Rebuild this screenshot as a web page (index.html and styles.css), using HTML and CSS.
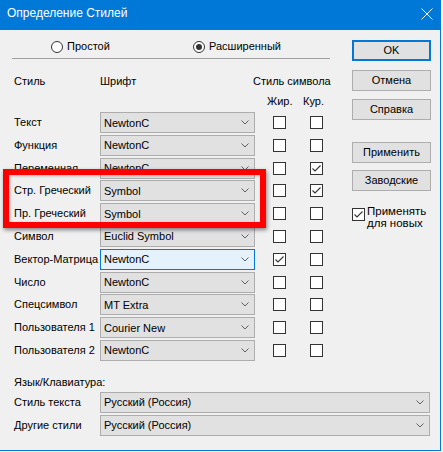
FILE: index.html
```html
<!DOCTYPE html>
<html lang="ru">
<head>
<meta charset="utf-8">
<title>Определение Стилей</title>
<link rel="stylesheet" href="styles.css">
</head>
<body>
<div class="window">
  <div class="titlebar">
    <span class="title">Определение Стилей</span>
    <svg class="close" width="12" height="12" viewBox="0 0 12 12"><path d="M0.5 0.5 L11.5 11.5 M11.5 0.5 L0.5 11.5" stroke="#fff" stroke-width="1" fill="none"/></svg>
  </div>
  <div class="client">
    <div class="top">
      <div class="main">
        <div class="modes">
          <label class="radio r1"><span class="dot"></span>Простой</label>
          <label class="radio"><span class="dot on"></span>Расширенный</label>
        </div>
        <div class="sep"></div>
        <div class="head1">
          <span class="h-style">Стиль</span>
          <span class="h-font">Шрифт</span>
          <span class="h-sym">Стиль символа</span>
        </div>
        <div class="head2">
          <span class="h-bold">Жир.</span>
          <span class="h-ital">Кур.</span>
        </div>
        <div class="rows">
          <span class="lbl">Текст</span>
          <div class="combo"><span>NewtonC</span><svg class="chev" width="8" height="5" viewBox="0 0 8 5"><path d="M0.5 0.5 L4 4 L7.5 0.5" stroke="#606060" fill="none"/></svg></div>
          <span class="cb c1"></span><span class="cb"></span>

          <span class="lbl">Функция</span>
          <div class="combo"><span>NewtonC</span><svg class="chev" width="8" height="5" viewBox="0 0 8 5"><path d="M0.5 0.5 L4 4 L7.5 0.5" stroke="#606060" fill="none"/></svg></div>
          <span class="cb c1"></span><span class="cb"></span>

          <span class="lbl">Переменная</span>
          <div class="combo"><span>NewtonC</span><svg class="chev" width="8" height="5" viewBox="0 0 8 5"><path d="M0.5 0.5 L4 4 L7.5 0.5" stroke="#606060" fill="none"/></svg></div>
          <span class="cb c1"></span><span class="cb checked"><svg width="11" height="11" viewBox="0 0 11 11"><path d="M1.5 5.5 L4 8 L9.5 2.5" stroke="#333" stroke-width="1.1" fill="none"/></svg></span>

          <span class="lbl">Стр. Греческий</span>
          <div class="combo"><span>Symbol</span><svg class="chev" width="8" height="5" viewBox="0 0 8 5"><path d="M0.5 0.5 L4 4 L7.5 0.5" stroke="#606060" fill="none"/></svg></div>
          <span class="cb c1"></span><span class="cb checked"><svg width="11" height="11" viewBox="0 0 11 11"><path d="M1.5 5.5 L4 8 L9.5 2.5" stroke="#333" stroke-width="1.1" fill="none"/></svg></span>

          <span class="lbl">Пр. Греческий</span>
          <div class="combo"><span>Symbol</span><svg class="chev" width="8" height="5" viewBox="0 0 8 5"><path d="M0.5 0.5 L4 4 L7.5 0.5" stroke="#606060" fill="none"/></svg></div>
          <span class="cb c1"></span><span class="cb"></span>

          <span class="lbl">Символ</span>
          <div class="combo"><span>Euclid Symbol</span><svg class="chev" width="8" height="5" viewBox="0 0 8 5"><path d="M0.5 0.5 L4 4 L7.5 0.5" stroke="#606060" fill="none"/></svg></div>
          <span class="cb c1"></span><span class="cb"></span>

          <span class="lbl">Вектор-Матрица</span>
          <div class="combo focus"><span>NewtonC</span><svg class="chev" width="8" height="5" viewBox="0 0 8 5"><path d="M0.5 0.5 L4 4 L7.5 0.5" stroke="#606060" fill="none"/></svg></div>
          <span class="cb c1 checked"><svg width="11" height="11" viewBox="0 0 11 11"><path d="M1.5 5.5 L4 8 L9.5 2.5" stroke="#333" stroke-width="1.1" fill="none"/></svg></span><span class="cb"></span>

          <span class="lbl">Число</span>
          <div class="combo"><span>NewtonC</span><svg class="chev" width="8" height="5" viewBox="0 0 8 5"><path d="M0.5 0.5 L4 4 L7.5 0.5" stroke="#606060" fill="none"/></svg></div>
          <span class="cb c1"></span><span class="cb"></span>

          <span class="lbl">Спецсимвол</span>
          <div class="combo"><span>MT Extra</span><svg class="chev" width="8" height="5" viewBox="0 0 8 5"><path d="M0.5 0.5 L4 4 L7.5 0.5" stroke="#606060" fill="none"/></svg></div>
          <span class="cb c1"></span><span class="cb"></span>

          <span class="lbl">Пользователя 1</span>
          <div class="combo"><span>Courier New</span><svg class="chev" width="8" height="5" viewBox="0 0 8 5"><path d="M0.5 0.5 L4 4 L7.5 0.5" stroke="#606060" fill="none"/></svg></div>
          <span class="cb c1"></span><span class="cb"></span>

          <span class="lbl">Пользователя 2</span>
          <div class="combo"><span>NewtonC</span><svg class="chev" width="8" height="5" viewBox="0 0 8 5"><path d="M0.5 0.5 L4 4 L7.5 0.5" stroke="#606060" fill="none"/></svg></div>
          <span class="cb c1"></span><span class="cb"></span>
        </div>
      </div>
      <div class="buttons">
        <div class="btn default">OK</div>
        <div class="btn b-cancel">Отмена</div>
        <div class="btn b-help">Справка</div>
        <div class="btn b-apply">Применить</div>
        <div class="btn b-factory">Заводские</div>
        <div class="applynew">
          <span class="cb checked"><svg width="11" height="11" viewBox="0 0 11 11"><path d="M1.5 5.5 L4 8 L9.5 2.5" stroke="#333" stroke-width="1.1" fill="none"/></svg></span>
          <span class="applytext">Применять<br>для новых</span>
        </div>
      </div>
    </div>
    <div class="lang">
      <div class="lang-title">Язык/Клавиатура:</div>
      <div class="lang-rows">
        <span class="lbl">Стиль текста</span>
        <div class="combo"><span>Русский (Россия)</span><svg class="chev" width="8" height="5" viewBox="0 0 8 5"><path d="M0.5 0.5 L4 4 L7.5 0.5" stroke="#606060" fill="none"/></svg></div>
        <span class="lbl">Другие стили</span>
        <div class="combo"><span>Русский (Россия)</span><svg class="chev" width="8" height="5" viewBox="0 0 8 5"><path d="M0.5 0.5 L4 4 L7.5 0.5" stroke="#606060" fill="none"/></svg></div>
      </div>
    </div>
  </div>
  <div class="highlight"></div>
</div>
</body>
</html>
```
FILE: styles.css
```css
* { box-sizing: border-box; }
html, body { margin: 0; padding: 0; background: #fff; }
body {
  font-family: "Liberation Sans", Arial, sans-serif;
  font-size: 11px;
  color: #000;
}
.window {
  position: relative;
  width: 441px;
  height: 451px;
  background: #f0f0f0;
  border-right: 1px solid #0078d7;
  border-bottom: 1px solid #0078d7;
  display: flex;
  flex-direction: column;
}
.titlebar {
  height: 30px;
  margin-right: -1px;
  background: #0078d7;
  color: #fff;
  display: flex;
  align-items: flex-start;
  justify-content: space-between;
  padding: 6px 8px 0 7px;
}
.title { font-size: 12px; line-height: 14px; }
.close { margin-top: 2px; }
.client { display: flex; flex-direction: column; }
.top { display: flex; }
.main { width: 352px; }
.modes {
  display: flex;
  margin: 10px 0 0 51px;
  height: 13px;
}
.radio {
  display: flex;
  align-items: center;
  gap: 4px;
  line-height: 13px;
}
.r1 { width: 142px; }
.dot {
  width: 12px; height: 12px;
  border: 1px solid #333;
  border-radius: 50%;
  background: #fff;
  position: relative;
}
.dot.on::after {
  content: "";
  position: absolute;
  left: 2px; top: 2px;
  width: 6px; height: 6px;
  border-radius: 50%;
  background: #333;
}
.sep {
  margin: 5px 0 0 12px;
  width: 318px;
  height: 1px;
  background: #a0a0a0;
}
.head1 {
  display: flex;
  margin-top: 16px;
  padding-left: 14px;
  line-height: 13px;
}
.h-style { width: 86px; }
.h-font { width: 153px; }
.head2 {
  display: flex;
  margin-top: 7px;
  padding-left: 267px;
  line-height: 13px;
}
.h-bold { width: 36px; }
.rows {
  margin-top: 4px;
  padding-left: 14px;
  display: grid;
  grid-template-columns: 86px 155px 55px 20px;
  grid-auto-rows: 21px;
  row-gap: 1.8px;
  align-items: center;
}
.lbl { white-space: nowrap; line-height: 13px; }
.combo {
  height: 21px;
  border: 1px solid #adadad;
  background: #e1e1e1;
  display: flex;
  align-items: center;
  justify-content: space-between;
  padding: 0 5px 0 3px;
  white-space: nowrap;
}
.combo.focus { border-color: #0078d7; background: #e5f1fb; }
.chev { display: block; }
.cb {
  width: 13px; height: 13px;
  border: 1px solid #333;
  background: #fff;
  display: flex;
  align-items: center;
  justify-content: center;
}
.cb svg { display: block; }
.c1 { margin-left: 18px; }
.buttons {
  width: 79px;
  padding-top: 10px;
  display: flex;
  flex-direction: column;
}
.btn {
  height: 21px;
  border: 1px solid #adadad;
  background: #e1e1e1;
  display: flex;
  align-items: center;
  justify-content: center;
  line-height: 13px;
}
.btn.default { border: 2px solid #0078d7; }
.b-cancel { margin-top: 9px; }
.b-help { margin-top: 8px; }
.b-apply { margin-top: 22px; }
.b-factory { margin-top: 7px; }
.applynew {
  display: flex;
  align-items: flex-start;
  margin-top: 14px;
  gap: 2px;
}
.applynew .cb { margin-top: 3px; }
.applytext { line-height: 12px; font-size: 11.5px; }
.lang { padding-left: 14px; }
.lang-title { margin-top: 15px; line-height: 13px; }
.lang-rows {
  margin-top: 3px;
  display: grid;
  grid-template-columns: 86px 330px;
  grid-auto-rows: 21px;
  row-gap: 2px;
  align-items: center;
}
.highlight {
  position: absolute;
  left: 3px;
  top: 169px;
  width: 263px;
  height: 59px;
  border: 6px solid #ff0000;
  box-shadow: 1px 2px 4px rgba(0,0,0,0.45), inset 1px 1px 3px rgba(0,0,0,0.25);
}
```
